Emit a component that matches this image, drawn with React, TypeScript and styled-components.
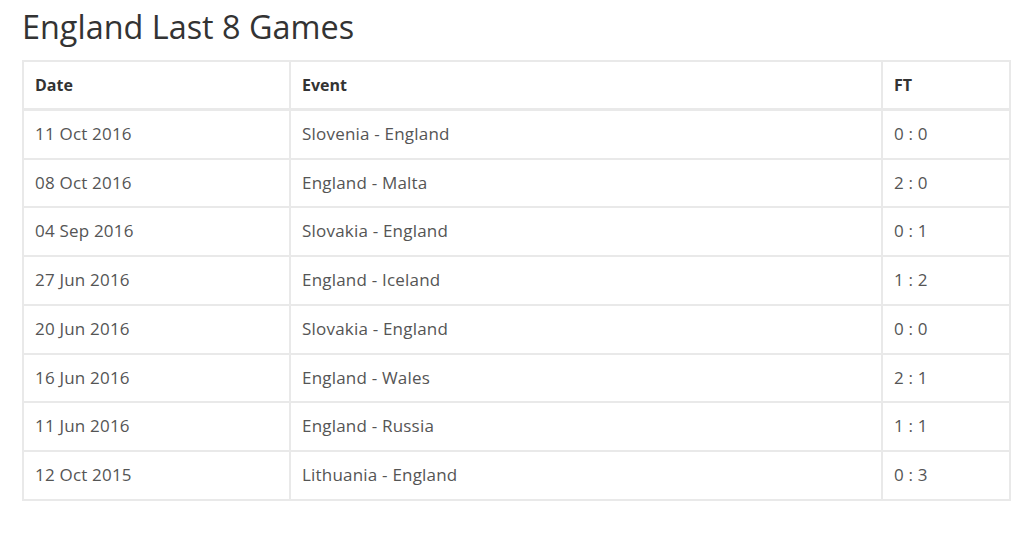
import React from "react";
import styled, { createGlobalStyle } from "styled-components";

const Global = createGlobalStyle`
  html, body { margin: 0; padding: 0; background: #fff; }
  body { font-family: "Open Sans", "Liberation Sans", sans-serif; }
`;

const Page = styled.div`
  padding: 4px 0 0 22px;
  width: 987px;
`;

const Title = styled.h2`
  margin: 0 0 12px 0;
  font-size: 32.4px;
  font-weight: 400;
  line-height: 44px;
  color: #333;
`;

const Table = styled.table`
  width: 987px;
  border-collapse: collapse;
  border: 2px solid #e9e9e9;
  table-layout: fixed;
`;

const Th = styled.th<{ $w: number }>`
  box-sizing: border-box;
  width: ${(p) => p.$w}px;
  text-align: left;
  font-size: 16px;
  font-weight: 700;
  color: #333;
  line-height: 22px;
  padding: 11.5px 11px 12.5px;
  border: 2px solid #e9e9e9;
  border-bottom-width: 3px;
`;

const Td = styled.td`
  font-size: 17px;
  letter-spacing: 0.2px;
  color: #555;
  line-height: 22.7px;
  padding: 12px 11px;
  border: 2px solid #e9e9e9;
`;

const games = [
  ["11 Oct 2016", "Slovenia - England", "0 : 0"],
  ["08 Oct 2016", "England - Malta", "2 : 0"],
  ["04 Sep 2016", "Slovakia - England", "0 : 1"],
  ["27 Jun 2016", "England - Iceland", "1 : 2"],
  ["20 Jun 2016", "Slovakia - England", "0 : 0"],
  ["16 Jun 2016", "England - Wales", "2 : 1"],
  ["11 Jun 2016", "England - Russia", "1 : 1"],
  ["12 Oct 2015", "Lithuania - England", "0 : 3"],
];

export default function App() {
  return (
    <>
      <Global />
      <Page>
        <Title>England Last 8 Games</Title>
        <Table>
          <thead>
            <tr>
              <Th $w={267}>Date</Th>
              <Th $w={592}>Event</Th>
              <Th $w={128}>FT</Th>
            </tr>
          </thead>
          <tbody>
            {games.map((g) => (
              <tr key={g[0]}>
                <Td>{g[0]}</Td>
                <Td>{g[1]}</Td>
                <Td>{g[2]}</Td>
              </tr>
            ))}
          </tbody>
        </Table>
      </Page>
    </>
  );
}
